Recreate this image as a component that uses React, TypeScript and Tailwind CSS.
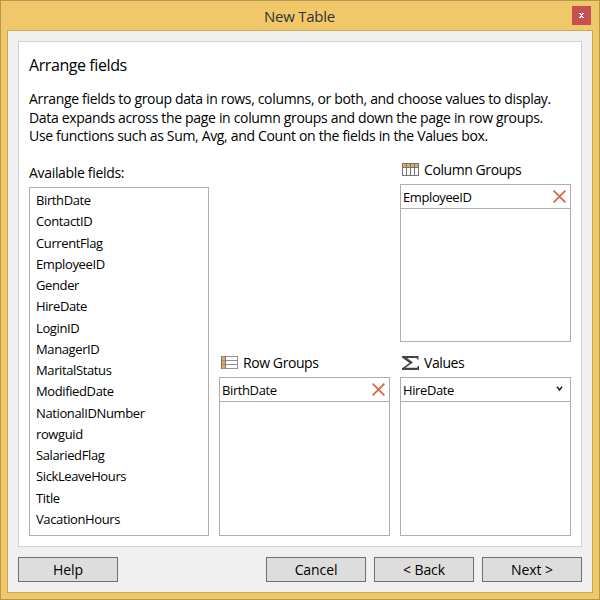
import React from "react";

const fields = [
  "BirthDate", "ContactID", "CurrentFlag", "EmployeeID", "Gender", "HireDate", "LoginID", "ManagerID",
  "MaritalStatus", "ModifiedDate", "NationalIDNumber", "rowguid", "SalariedFlag", "SickLeaveHours", "Title", "VacationHours",
];

function ColumnIcon() {
  return (
    <svg width="17" height="13" viewBox="0 0 17 13" shapeRendering="crispEdges" className="-mt-px">
      <rect x="1" y="1" width="15" height="3" fill="#dfae50" />
      <path d="M0.5 0.5H16.5V12.5H0.5ZM0 4.5H17M4.5 0V13M8.5 0V13M12.5 0V13" fill="none" stroke="#747474" />
    </svg>
  );
}

function RowIcon() {
  return (
    <svg width="17" height="13" viewBox="0 0 17 13" shapeRendering="crispEdges" className="-mt-px">
      <rect x="1" y="1" width="3" height="11" fill="#dfae50" />
      <path d="M0 0.5H17M0 4.5H17M0 8.5H17M0 12.5H17M16.5 0V13" fill="none" stroke="#929292" />
      <path d="M0.5 0V13M4.5 0V13" fill="none" stroke="#747474" />
    </svg>
  );
}

function SigmaIcon() {
  return (
    <svg width="17" height="14" viewBox="0 0 17 14" className="-mt-px">
      <path d="M0 0H16.5V3.5H15.5L14.5 2H5L11 6.5L3.5 11.8H15L16 10H17V14H0V12.3L7.5 7L0 1.5Z" fill="#444" />
    </svg>
  );
}

function RemoveIcon() {
  return (
    <svg width="13" height="13" viewBox="0 0 13 13">
      <path d="M0.6 0.6L12.4 12.4M12.4 0.6L0.6 12.4" stroke="#d9664c" strokeWidth="1.8" />
    </svg>
  );
}

function ChevronIcon() {
  return (
    <svg width="7" height="6" viewBox="0 0 7 6" className="-mt-px mr-[3px]">
      <path d="M1 0.8L3.5 4L6 0.8" fill="none" stroke="#222" strokeWidth="1.6" />
    </svg>
  );
}

type GroupProps = { icon: React.ReactNode; title: string; item: string; action: React.ReactNode };

function Group({ icon, title, item, action }: GroupProps) {
  return (
    <div className="flex w-[171px] flex-col">
      <div className="flex h-[28px] items-center gap-[5px] pl-[2px]">
        {icon}
        <span className="text-[14px] leading-[20px] tracking-[-0.42px]">{title}</span>
      </div>
      <div className="flex flex-1 flex-col border border-[#abadb3]">
        <div className="flex h-[24px] shrink-0 items-center justify-between border-b border-[#abadb3] pr-[4px] pl-[2px]">
          <span className="text-[13px] leading-[20px] tracking-[-0.4px]">{item}</span>
          {action}
        </div>
      </div>
    </div>
  );
}

function Button({ children }: { children: React.ReactNode }) {
  return (
    <button className="h-[25px] w-[100px] border border-[#707070] bg-[#dddddd] text-center text-[14px] leading-[23px] tracking-[-0.1px]">
      {children}
    </button>
  );
}

export default function App() {
  return (
    <div className="flex h-[600px] w-[600px] flex-col border border-[#b8964d] bg-[#f0c869] px-[6px] pb-[6px] font-['Open_Sans','Noto_Sans',sans-serif] text-black">
      <div className="flex h-[29px] shrink-0 items-center">
        <div className="ml-[20px] flex-1 text-center text-[15px] leading-[20px] tracking-[-0.25px] text-[#333]">New Table</div>
        <button className="mr-[2px] flex size-[19px] items-center justify-center bg-[#c75050]">
          <svg width="5" height="5" viewBox="0 0 5 5" shapeRendering="crispEdges">
            <path d="M0 0H2V1H3V0H5V1H4V2H3V3H4V4H5V5H3V4H2V5H0V4H1V3H2V2H1V1H0Z" fill="white" />
          </svg>
        </button>
      </div>
      <div className="flex flex-1 flex-col border border-[#c9a858] bg-[#f0f0f0] px-[10px] pt-[10px]">
        <div className="flex h-[506px] flex-col border border-[#d2d2d2] bg-white px-[10px]">
          <h1 className="mt-[11px] mb-px text-[16px] leading-[24px] tracking-[-0.42px]">Arrange fields</h1>
          <div className="mt-[12px] text-[14px] leading-[18.5px] tracking-[-0.33px] whitespace-nowrap">
            <p>Arrange fields to group data in rows, columns, or both, and choose values to display.</p>
            <p>Data expands across the page in column groups and down the page in row groups.</p>
            <p>Use functions such as Sum, Avg, and Count on the fields in the Values box.</p>
          </div>
          <div className="mt-[10.5px] flex h-[380px]">
            <div className="flex w-[180px] flex-col">
              <div className="h-[31px] pt-[7px] text-[14px] leading-[20px] tracking-[-0.32px]">Available fields:</div>
              <ul className="h-[349px] border border-[#abadb3] pt-[2px] pl-[6px] text-[13px] leading-[21.27px] tracking-[-0.38px]">
                {fields.map((f) => <li key={f}>{f}</li>)}
              </ul>
            </div>
            <div className="ml-[10px] flex w-[171px] flex-col justify-end">
              <div className="flex h-[187px]">
                <Group icon={<RowIcon />} title="Row Groups" item="BirthDate" action={<RemoveIcon />} />
              </div>
            </div>
            <div className="ml-[10px] flex w-[171px] flex-col justify-between">
              <div className="flex h-[186px]">
                <Group icon={<ColumnIcon />} title="Column Groups" item="EmployeeID" action={<RemoveIcon />} />
              </div>
              <div className="flex h-[187px]">
                <Group icon={<SigmaIcon />} title="Values" item="HireDate" action={<ChevronIcon />} />
              </div>
            </div>
          </div>
        </div>
        <div className="mt-[10px] flex gap-[8px]">
          <Button>Help</Button>
          <div className="flex-1" />
          <Button>Cancel</Button>
          <Button>&lt; Back</Button>
          <Button>Next &gt;</Button>
        </div>
      </div>
    </div>
  );
}
